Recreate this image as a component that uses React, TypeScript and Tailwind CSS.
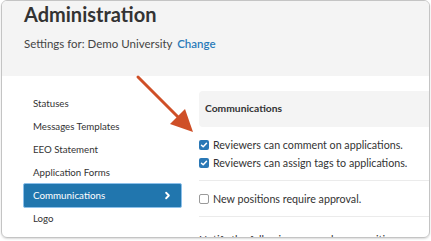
import { ChevronRight } from 'lucide-react';

const MENU = [
  'Statuses',
  'Messages Templates',
  'EEO Statement',
  'Application Forms',
  'Communications',
  'Logo'
];

function Checkbox({ checked }: { checked: boolean }) {
  if (checked) {
    return (
      <span className="flex h-[10px] w-[10px] items-center justify-center rounded-[2px] bg-[#2a78b6]">
        <svg width="8" height="8" viewBox="0 0 8 8">
          <path d="M1.5 4.2 L3.2 5.8 L6.5 2.2" fill="none" stroke="#fff" strokeWidth="1.5" strokeLinecap="round" strokeLinejoin="round" />
        </svg>
      </span>
    );
  }
  return <span className="h-[10px] w-[10px] rounded-[2px] border border-[#9a9a9a] bg-white" />;
}

export default function App() {
  return (
    <div className="relative h-[241px] w-[431px] overflow-hidden bg-white font-['Lato','Liberation_Sans',sans-serif] text-[#333]">
      <div className="ml-[1px] h-[238px] w-[429px] overflow-hidden rounded-[6px] border border-[#c4c4c4] shadow-[0_1px_2px_rgba(0,0,0,0.15)]">
        {/* en-tête */}
        <div className="h-[75px] bg-[#f4f4f4] pl-[22px] pt-[1px]">
          <h1 className="text-[20px] font-bold leading-[24px] text-[#333]">Administration</h1>
          <p className="mt-[10px] text-[11.5px] leading-[16px] text-[#444]">
            Settings for: Demo University{' '}
            <span className="ml-[2px] font-semibold text-[#2b7bb9]">Change</span>
          </p>
        </div>

        <div className="flex pl-[21px] pt-[16px]">
          {/* menu */}
          <ul className="w-[159px] shrink-0">
            {MENU.map((item) =>
              item === 'Communications' ? (
                <li
                  key={item}
                  className="-my-[1px] flex h-[25px] items-center justify-between rounded-[2px] border border-[#8cc0ea] bg-[#2176ae] pl-[9px] pr-[8px] text-[9.8px] text-white"
                >
                  {item}
                  <ChevronRight size={11} strokeWidth={4} />
                </li>
              ) : (
                <li key={item} className="flex h-[23px] items-center pl-[10px] text-[9.7px] text-[#333]">
                  {item}
                </li>
              )
            )}
          </ul>

          {/* contenu */}
          <div className="ml-[17px] -mt-[1px] flex-1">
            <div className="flex h-[36px] items-center rounded-l-[4px] bg-[#f4f4f4] pl-[6px] text-[10.3px] font-bold text-[#333]">
              Communications
            </div>
            <div className="mt-[9px] flex h-[18px] items-center gap-[4px] text-[10.7px]">
              <Checkbox checked />
              Reviewers can comment on applications.
            </div>
            <div className="flex h-[18px] items-center gap-[4px] text-[10.7px]">
              <Checkbox checked />
              Reviewers can assign tags to applications.
            </div>
            <div className="mt-[8px] border-t border-[#ebebeb]" />
            <div className="mt-[9px] flex h-[18px] items-center gap-[4px] text-[10.7px]">
              <Checkbox checked={false} />
              New positions require approval.
            </div>
            <div className="mt-[8px] border-t border-[#ebebeb]" />
            <div className="mt-[16px] flex items-center text-[10.7px] leading-[14px]">
              Notify the following users when a position requires approval
              <span className="ml-auto mr-[10px] flex h-[11px] w-[11px] items-center justify-center rounded-full bg-[#555] text-[8px] font-bold text-white">?</span>
            </div>
          </div>
        </div>
      </div>

      {/* flèche */}
      <svg className="absolute left-0 top-0" width="431" height="241" viewBox="0 0 431 241">
        <line x1="138" y1="77" x2="182" y2="121" stroke="#cf4f27" strokeWidth="3" strokeLinecap="round" />
        <polygon points="193,132 170,124 185,109" fill="#cf4f27" />
      </svg>
    </div>
  );
}
